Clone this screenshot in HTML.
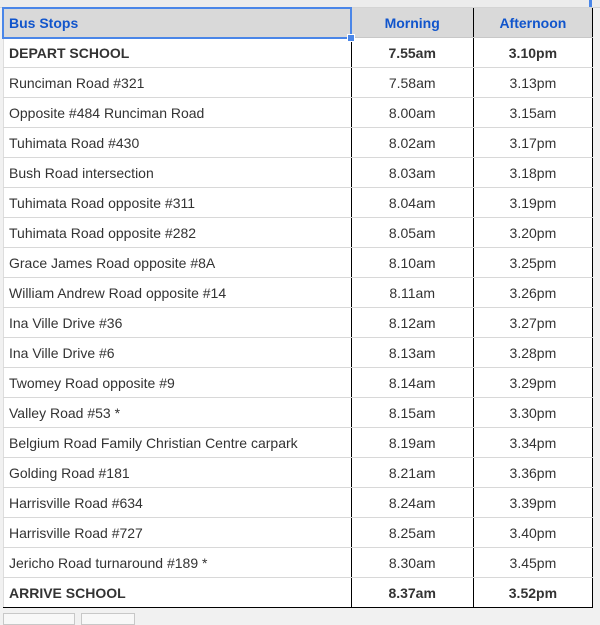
<!DOCTYPE html><html><head><style>
body{margin:0;width:600px;height:617px;background:#f1f1f1;font-family:"Liberation Sans",Arial,sans-serif;position:relative;overflow:hidden}
.top{position:absolute;left:0;top:0;width:600px;height:7px;background:#ececec;border-bottom:1px solid #d4d4d4}
.t{position:absolute;left:3px;top:8px;width:590px;border-collapse:collapse;background:#fff}
td{height:29px;padding:0;font-size:14px;color:#333;border-bottom:1px solid #d8d8d8;border-right:1px solid #000}
td.a{width:341px;padding-left:5px;border-right:1px solid #000;border-left:1px solid #ddd}
td.b{width:121px;text-align:center}
td.c{width:118px;text-align:center}
tr.h td{background:#d9d9d9;color:#1155cc;font-weight:bold;border-bottom:1px solid #c8c8c8}
tr.bd td{font-weight:bold}
tr.last td{border-bottom:1px solid #000}
.sel{position:absolute;left:2px;top:7px;width:346px;height:28px;border:2px solid #4a86e8}
.hd{position:absolute;left:347px;top:34px;width:6px;height:6px;background:#4a86e8;border:1px solid #fff}
.tab{position:absolute;top:613px;height:10px;border:1px solid #c8c8c8;background:#f8f8f8}
</style></head><body>
<div class="top"></div>
<div style="position:absolute;left:589px;top:0;width:3px;height:7px;background:#4a86e8"></div>
<table class="t">
<tr class="h"><td class="a">Bus Stops</td><td class="b">Morning</td><td class="c">Afternoon</td></tr>
<tr class="bd"><td class="a">DEPART SCHOOL</td><td class="b">7.55am</td><td class="c">3.10pm</td></tr>
<tr><td class="a">Runciman Road #321</td><td class="b">7.58am</td><td class="c">3.13pm</td></tr>
<tr><td class="a">Opposite #484 Runciman Road</td><td class="b">8.00am</td><td class="c">3.15am</td></tr>
<tr><td class="a">Tuhimata Road #430</td><td class="b">8.02am</td><td class="c">3.17pm</td></tr>
<tr><td class="a">Bush Road intersection</td><td class="b">8.03am</td><td class="c">3.18pm</td></tr>
<tr><td class="a">Tuhimata Road opposite #311</td><td class="b">8.04am</td><td class="c">3.19pm</td></tr>
<tr><td class="a">Tuhimata Road opposite #282</td><td class="b">8.05am</td><td class="c">3.20pm</td></tr>
<tr><td class="a">Grace James Road opposite #8A</td><td class="b">8.10am</td><td class="c">3.25pm</td></tr>
<tr><td class="a">William Andrew Road opposite #14</td><td class="b">8.11am</td><td class="c">3.26pm</td></tr>
<tr><td class="a">Ina Ville Drive #36</td><td class="b">8.12am</td><td class="c">3.27pm</td></tr>
<tr><td class="a">Ina Ville Drive #6</td><td class="b">8.13am</td><td class="c">3.28pm</td></tr>
<tr><td class="a">Twomey Road opposite #9</td><td class="b">8.14am</td><td class="c">3.29pm</td></tr>
<tr><td class="a">Valley Road #53 *</td><td class="b">8.15am</td><td class="c">3.30pm</td></tr>
<tr><td class="a">Belgium Road Family Christian Centre carpark</td><td class="b">8.19am</td><td class="c">3.34pm</td></tr>
<tr><td class="a">Golding Road #181</td><td class="b">8.21am</td><td class="c">3.36pm</td></tr>
<tr><td class="a">Harrisville Road #634</td><td class="b">8.24am</td><td class="c">3.39pm</td></tr>
<tr><td class="a">Harrisville Road #727</td><td class="b">8.25am</td><td class="c">3.40pm</td></tr>
<tr><td class="a">Jericho Road turnaround #189 *</td><td class="b">8.30am</td><td class="c">3.45pm</td></tr>
<tr class="bd last"><td class="a">ARRIVE SCHOOL</td><td class="b">8.37am</td><td class="c">3.52pm</td></tr>
</table>
<div class="sel"></div><div class="hd"></div>
<div class="tab" style="left:3px;width:70px"></div>
<div class="tab" style="left:81px;width:52px"></div>
</body></html>
